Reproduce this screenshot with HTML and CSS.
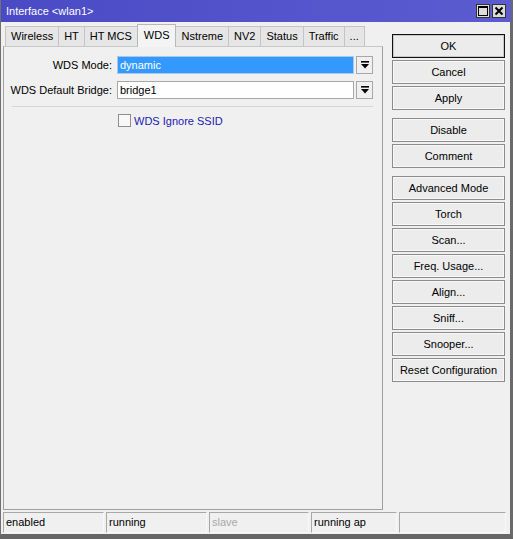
FILE: index.html
```html
<!DOCTYPE html>
<html>
<head>
<meta charset="utf-8">
<link rel="stylesheet" href="styles.css">
</head>
<body>
<div class="window">
  <div class="titlebar">
    <span class="title">Interface &lt;wlan1&gt;</span>
    <div class="tb-buttons">
      <span class="tb-btn"><svg width="10" height="10" viewBox="0 0 10 10"><rect x="0.5" y="0.5" width="9" height="9" fill="none" stroke="#000" stroke-width="1"/><rect x="0" y="0" width="10" height="2" fill="#000"/></svg></span>
      <span class="tb-btn"><svg width="10" height="10" viewBox="0 0 10 10"><path d="M1.5 1.5 L8.5 8.5 M8.5 1.5 L1.5 8.5" stroke="#000" stroke-width="2"/></svg></span>
    </div>
  </div>
  <div class="body">
    <div class="left">
      <div class="tabs">
        <span class="tab">Wireless</span>
        <span class="tab">HT</span>
        <span class="tab">HT MCS</span>
        <span class="tab active">WDS</span>
        <span class="tab">Nstreme</span>
        <span class="tab">NV2</span>
        <span class="tab">Status</span>
        <span class="tab">Traffic</span>
        <span class="tab">...</span>
      </div>
      <div class="panel">
        <div class="row">
          <span class="label">WDS Mode:</span>
          <span class="field selected">dynamic</span>
          <span class="dd"><svg width="8" height="8" viewBox="0 0 8 8"><rect x="0" y="0" width="8" height="1.6" fill="#000"/><polygon points="0,3 8,3 4,7.5" fill="#000"/></svg></span>
        </div>
        <div class="row">
          <span class="label">WDS Default Bridge:</span>
          <span class="field">bridge1</span>
          <span class="dd"><svg width="8" height="8" viewBox="0 0 8 8"><rect x="0" y="0" width="8" height="1.6" fill="#000"/><polygon points="0,3 8,3 4,7.5" fill="#000"/></svg></span>
        </div>
        <div class="sep"></div>
        <div class="check-row">
          <span class="checkbox"></span>
          <span class="check-label">WDS Ignore SSID</span>
        </div>
      </div>
    </div>
    <div class="side">
      <div class="group">
        <span class="btn default">OK</span>
        <span class="btn">Cancel</span>
        <span class="btn">Apply</span>
      </div>
      <div class="group">
        <span class="btn">Disable</span>
        <span class="btn">Comment</span>
      </div>
      <div class="group">
        <span class="btn">Advanced Mode</span>
        <span class="btn">Torch</span>
        <span class="btn">Scan...</span>
        <span class="btn">Freq. Usage...</span>
        <span class="btn">Align...</span>
        <span class="btn">Sniff...</span>
        <span class="btn">Snooper...</span>
        <span class="btn">Reset Configuration</span>
      </div>
    </div>
  </div>
  <div class="status">
    <span class="cell c1">enabled</span>
    <span class="cell c2">running</span>
    <span class="cell c3 dim">slave</span>
    <span class="cell c4">running ap</span>
    <span class="cell c5"></span>
  </div>
</div>
</body>
</html>
```

FILE: styles.css
```css
html, body {
  margin: 0;
  padding: 0;
  background: #f0f0f0;
}
body {
  font-family: "Liberation Sans", Arial, sans-serif;
  font-size: 11px;
  color: #000;
}
.window {
  width: 513px;
  height: 539px;
  box-sizing: border-box;
  border-left: 1px solid #707070;
  border-right: 3px solid #6a6a6a;
  border-bottom: 5px solid #666;
  display: flex;
  flex-direction: column;
  background: #f0f0f0;
}
.titlebar {
  height: 22px;
  flex: none;
  background: linear-gradient(to right, #4a4ac6, #5c5cd0);
  display: flex;
  align-items: center;
  justify-content: space-between;
  padding: 0 5px 0 5px;
  margin-right: -1px;
}
.title {
  color: #fff;
  font-size: 11px;
}
.tb-buttons {
  display: flex;
  gap: 2px;
}
.tb-btn {
  width: 12px;
  height: 12px;
  border: 1px solid #333;
  background: #dcdcdc;
  display: flex;
  align-items: center;
  justify-content: center;
}
.body {
  flex: 1;
  display: flex;
  padding: 2px 0 0 2px;
  min-height: 0;
}
.left {
  width: 380px;
  display: flex;
  flex-direction: column;
}
.tabs {
  display: flex;
  align-items: flex-end;
  height: 22px;
  padding-left: 2px;
  position: relative;
  z-index: 1;
}
.tab {
  height: 19px;
  line-height: 19px;
  padding: 0 5px;
  background: #e6e6e6;
  border: 1px solid #c4c4c4;
  border-bottom: none;
  margin-right: -1px;
  color: #000;
}
.tab.active {
  height: 22px;
  line-height: 20px;
  background: #f4f4f4;
  border-color: #b8b8b8;
  margin-bottom: -1px;
  padding: 0 6px;
  position: relative;
  z-index: 2;
}
.panel {
  flex: 1;
  border: 1px solid #a0a0a0;
  border-top-color: #c8c8c8;
  padding: 9px 0 0 0;
  background: #f0f0f0;
}
.row {
  display: flex;
  align-items: center;
  height: 18px;
  margin-bottom: 7px;
}
.label {
  width: 108px;
  text-align: right;
  margin-right: 5px;
}
.field {
  width: 233px;
  height: 16px;
  line-height: 16px;
  border: 1px solid #a8a8a8;
  background: #fff;
  padding-left: 2px;
  margin-right: 2px;
}
.field.selected {
  background: #3399ff;
  color: #fff;
  border-color: #a9c9ea;
}
.dd {
  width: 15px;
  height: 16px;
  border: 1px solid #a8a8a8;
  background: #f0f0f0;
  display: flex;
  align-items: center;
  justify-content: center;
}
.sep {
  height: 1px;
  background: #d6d6d6;
  margin: 2px 0 0 8px;
  width: 361px;
}
.check-row {
  display: flex;
  align-items: center;
  margin: 7px 0 0 114px;
}
.checkbox {
  width: 11px;
  height: 11px;
  border: 1px solid #8f8f8f;
  background: #f8f8f8;
  margin-right: 3px;
}
.check-label {
  color: #2020b0;
}
.side {
  display: flex;
  flex-direction: column;
  margin-left: 9px;
  padding-top: 10px;
  width: 113px;
  gap: 8px;
}
.group {
  display: flex;
  flex-direction: column;
  gap: 2px;
}
.btn {
  height: 22px;
  line-height: 22px;
  text-align: center;
  border: 1px solid #8c8c8c;
  background: #ececec;
  box-shadow: inset 0 0 0 1px #f8f8f8;
}
.btn.default {
  border-color: #111;
  box-shadow: inset 0 0 0 1px #c8c8c8;
}
.status {
  flex: none;
  display: flex;
  height: 21px;
  margin: 2px 0 1px 2px;
  gap: 2px;
}
.cell {
  box-sizing: border-box;
  height: 21px;
  line-height: 19px;
  border: 1px solid #a8a8a8;
  border-right-color: #f8f8f8;
  border-bottom-color: #f8f8f8;
  padding-left: 2px;
}
.c1 { width: 101px; }
.c2 { width: 101px; }
.c3 { width: 100px; }
.c4 { width: 86px; }
.c5 { width: 107px; }
.dim { color: #a8a8a8; }
```
